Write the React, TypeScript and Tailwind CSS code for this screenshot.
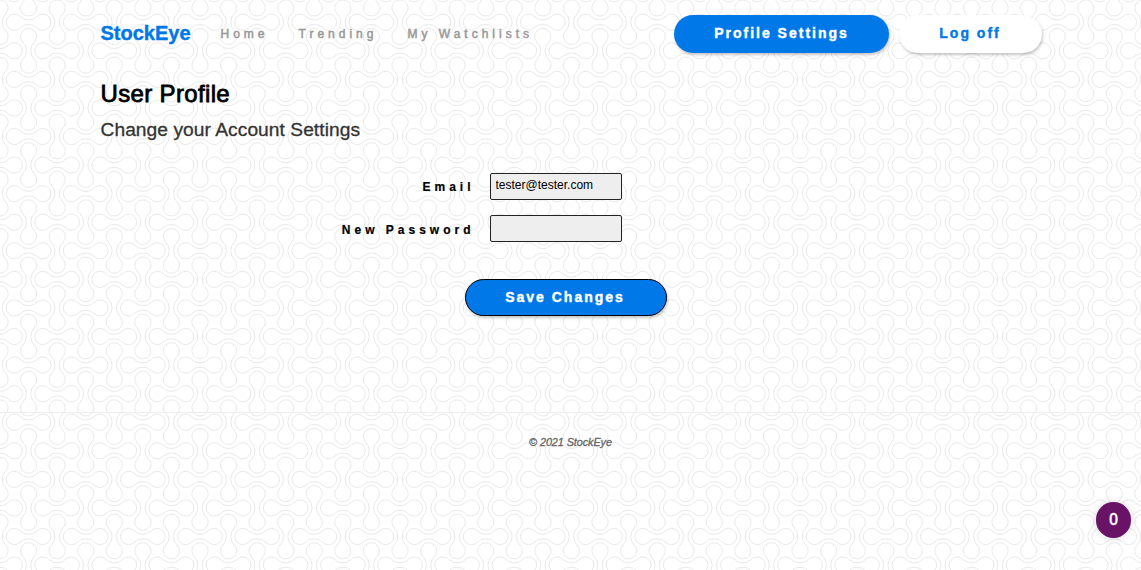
import React from "react";

const DUMBBELL =
  "M-8.55 -5.75A12 12 0 0 0 8.55 -5.75A8.1 8.1 0 1 1 8.55 5.75A12 12 0 0 0 -8.55 5.75A8.1 8.1 0 1 1 -8.55 -5.75Z";

const STEP = 28.572;

function Backdrop() {
  const cells = [];
  for (let row = -1; row < 21; row++) {
    for (let col = 0; col < 41; col++) {
      cells.push({ x: col * STEP, y: 22.2 + row * STEP, turn: (row + col) % 2 === 0 ? 90 : 0 });
    }
  }
  return (
    <svg className="absolute inset-0 -z-10 h-full w-full" aria-hidden="true" fill="none" stroke="#e9e9e9" strokeWidth="1">
      {cells.map(({ x, y, turn }) => (
        <path key={`${x}-${y}`} d={DUMBBELL} transform={`translate(${x} ${y}) rotate(${turn})`} />
      ))}
    </svg>
  );
}

const pill = "rounded-full text-[14px] font-bold tracking-[2px] shadow-[1px_2px_3px_rgba(0,0,0,0.22)] [-webkit-text-stroke:0.4px_currentColor]";
const field = "h-[27px] w-[132px] rounded-[2px] border border-[#222] bg-[#eee] px-[5px] pb-[3px] text-[12px] text-black outline-none";
const label = "pr-[3px] text-right text-[12px] font-bold tracking-[4px] [-webkit-text-stroke:0.2px_currentColor]";

export default function App() {
  return (
    <div className="relative isolate h-[570px] overflow-hidden bg-white font-['Liberation_Sans',Arial,sans-serif] text-black">
      <Backdrop />
      <header className="flex h-[68px] items-center pr-[99px] pl-[100.5px]">
        <a className="w-[120px] pb-[3px] text-[20px] font-bold text-[#0078e8] [-webkit-text-stroke:0.4px_currentColor]">StockEye</a>
        <nav className="flex gap-[30px] text-[12px] tracking-[4px] text-[#999] [-webkit-text-stroke:0.5px_currentColor]">
          <a>Home</a>
          <a>Trending</a>
          <a>My Watchlists</a>
        </nav>
        <div className="ml-auto flex gap-[10px]">
          <button className={`${pill} h-[38px] w-[215px] bg-[#0078e8] pb-[2px] text-white`}>Profile Settings</button>
          <button className={`${pill} h-[38px] w-[143px] bg-white pr-[1px] pb-[2px] text-[#0078e8]`}>Log off</button>
        </div>
      </header>
      <main className="px-[100.5px]">
        <h1 className="mt-[8px] text-[24px] leading-[36px] tracking-[0.35px] [-webkit-text-stroke:0.8px_currentColor]">User Profile</h1>
        <h2 className="mt-[4px] text-[19.2px] leading-[27px] tracking-[0.05px] text-[#333] [-webkit-text-stroke:0.3px_currentColor]">Change your Account Settings</h2>
        <form className="mt-[29.5px]">
          <div className="grid grid-cols-[377px_132px] items-center gap-x-[12px] gap-y-[15px]">
            <label className={`${label} pt-[1px]`}>Email</label>
            <input className={field} defaultValue="tester@tester.com" />
            <label className={`${label} pt-[3px]`}>New Password</label>
            <input className={field} type="password" />
          </div>
          <button type="button" className={`${pill} mt-[37.5px] ml-[364px] block h-[37px] w-[202px] border border-black bg-[#0078e8] pr-[1px] text-white`}>Save Changes</button>
        </form>
      </main>
      <footer className="mt-[96px] border-t border-[#eee] pt-[21px] text-center text-[10.8px] leading-[16px] tracking-[-0.05px] text-[#666] italic [-webkit-text-stroke:0.3px_currentColor]">© 2021 StockEye</footer>
      <div className="absolute top-[502px] right-[10px] flex h-[36px] w-[35px] items-center justify-center rounded-full bg-[#691367] pb-[2px] font-['Noto_Sans',sans-serif] text-[16px] font-medium text-white shadow-[0_0_8px_rgba(0,0,0,0.15)] [-webkit-text-stroke:0.3px_currentColor]">0</div>
    </div>
  );
}
